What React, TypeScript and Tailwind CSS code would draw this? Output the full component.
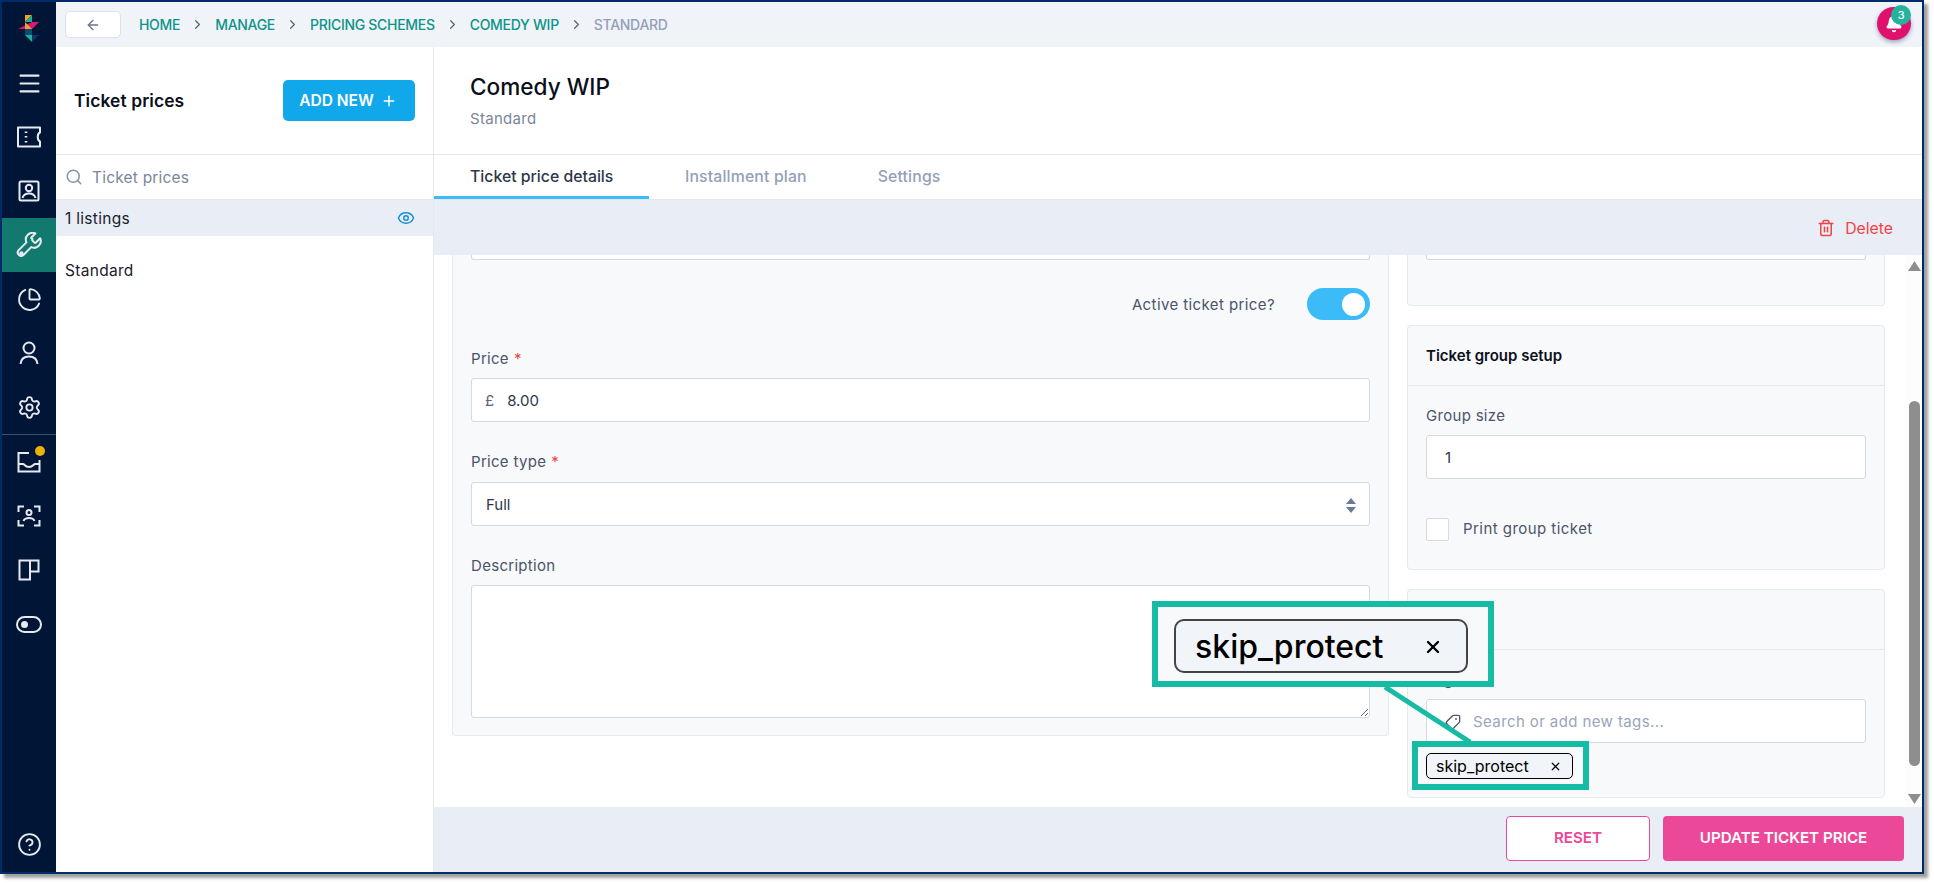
import React from "react";
import { ArrowLeft, ChevronRight, Search, Eye, Trash2, Tag, X, Menu, ChartPie, Settings, CircleHelp, Plus, Bell } from "lucide-react";

const Crumb = ({ children, last }: { children: React.ReactNode; last?: boolean }) => (
  <>
    <span className={last ? "text-[#94a0b8]" : "text-[#0d9488]"}>{children}</span>
    {!last && <ChevronRight size={15} className="text-[#5b6678] mx-[10px]" strokeWidth={2} />}
  </>
);

const NavItem = ({ children, active }: { children: React.ReactNode; active?: boolean }) => (
  <div className={`relative h-[54px] flex items-center justify-center text-[#e6e9f0] ${active ? "bg-[#11796d]" : ""}`}>
    {children}
  </div>
);

const Logo = () => (
  <svg width="22" height="28" viewBox="19 16 22 28">
    <polygon points="26,16 33,16 26,23" fill="#f59e2c" />
    <polygon points="33,16 33,23 26,23" fill="#18b39b" />
    <polygon points="19,30 33,23 33,30" fill="#e0116f" />
    <polygon points="33,23 40,23 33,30" fill="#d81b7a" />
    <polygon points="26,23 33,30 26,30" fill="#f59e2c" />
    <polygon points="26,30 33,30 33,36 26,36" fill="#0b4a78" />
    <polygon points="26,36 33,36 33,43" fill="#18b39b" />
    <polygon points="33,36 40,36 33,43" fill="#0b3566" />
  </svg>
);

const stroke = { fill: "none", stroke: "currentColor", strokeWidth: 2 };

const TicketIcon = () => (
  <svg width="24" height="22" viewBox="0 0 24 22" {...stroke}>
    <path d="M1 1.5H23V6.5C20 7.5 20 14.5 23 15.5V20.5H1Z" strokeLinejoin="round" />
    <path d="M9 5.5v1.5M9 10v1.5M9 15v1.5" strokeWidth="2.6" />
  </svg>
);
const ContactIcon = () => (
  <svg width="22" height="22" viewBox="0 0 22 22" {...stroke}>
    <rect x="1.5" y="1.5" width="19" height="19" rx="1.5" />
    <circle cx="11" cy="8" r="3.2" />
    <path d="M4.5 18c1-3.5 3.5-4.5 6.500-4.500s5.500 1 6.500 4.500" />
  </svg>
);
const WrenchIcon = () => (
  <svg width="27" height="27" viewBox="0 0 24 24" fill="none" stroke="currentColor" strokeWidth="1.8" strokeLinecap="round" strokeLinejoin="round">
    <path d="M14.700 6.300a1 1 0 0 0 0 1.400l1.600 1.600a1 1 0 0 0 1.400 0l3.770-3.770a6 6 0 0 1-7.940 7.940l-6.910 6.910a3 3 0 0 1-4.240-4.240l6.910-6.910a6 6 0 0 1 7.940-7.940l-3.760 3.760z" />
    <circle cx="4.800" cy="19.200" r="1.100" />
  </svg>
);
const UserIcon = () => (
  <svg width="20" height="24" viewBox="0 0 20 24" {...stroke}>
    <circle cx="10" cy="7" r="5.500" />
    <path d="M1.500 23c.5-5 3.500-7.500 8.500-7.500s8 2.500 8.500 7.500" />
  </svg>
);
const InboxIcon = () => (
  <svg width="24" height="22" viewBox="0 0 24 22" {...stroke}>
    <path d="M12 2H1.500V20.500H22.500V9" />
    <path d="M1.500 13H6c1.500 0 2 3 6 3s4.500-3 6-3h4.500" />
  </svg>
);
const ScanIcon = () => (
  <svg width="24" height="22" viewBox="0 0 24 22" {...stroke}>
    <path d="M1.500 7V1.500H7M17 1.500h5.500V7M1.500 15v5.500H7M17 20.500h5.500V15" />
    <circle cx="12" cy="7.500" r="2.500" />
    <path d="M6.500 16c1-2.500 3-3 5.500-3s4.500.5 5.500 3" />
  </svg>
);
const BoardIcon = () => (
  <svg width="22" height="22" viewBox="0 0 22 22" {...stroke}>
    <path d="M1.500 1.500H20.500V12.500H12V20.500H1.500ZM12 1.500V12.500" />
  </svg>
);
const ToggleIcon = () => (
  <svg width="26" height="17" viewBox="0 0 26 17">
    <rect x="1" y="1" width="24" height="15" rx="7.500" fill="none" stroke="currentColor" strokeWidth="2" />
    <circle cx="8.500" cy="8.500" r="3.500" fill="currentColor" />
  </svg>
);

const Label = ({ children, req }: { children: React.ReactNode; req?: boolean }) => (
  <div className="pt-[1px] text-[15px] leading-[20px] text-[#4a5568] tracking-[0.3px]">
    {children}
    {req && <span className="text-[#ef4444] ml-[5px]">*</span>}
  </div>
);

const field = "h-[44px] w-full bg-white border border-[#d5d9e2] rounded-[3px] text-[15px] text-[#2d3748] pt-[2px]";

export default function App() {
  return (
    <div className="w-full h-[883px] bg-white font-['Inter',sans-serif] overflow-hidden">
      <div className="relative w-[1924px] h-[874px] border-2 border-[#002b6b] shadow-[4px_4px_3px_#a0a0a0] flex">
        {/* Sidebar */}
        <aside className="w-[54px] shrink-0 bg-[#011536] flex flex-col">
          <div className="h-[54px] flex items-center justify-center"><Logo /></div>
          <NavItem><Menu size={27} strokeWidth={1.8} /></NavItem>
          <NavItem><TicketIcon /></NavItem>
          <NavItem><ContactIcon /></NavItem>
          <NavItem active><WrenchIcon /></NavItem>
          <NavItem><ChartPie size={25} strokeWidth={1.8} /></NavItem>
          <NavItem><UserIcon /></NavItem>
          <NavItem><Settings size={25} strokeWidth={1.8} /></NavItem>
          <div className="h-px bg-[#3c4f70]" />
          <NavItem>
            <InboxIcon />
            <span className="absolute left-[33px] top-[11px] w-[10px] h-[10px] rounded-full bg-[#eab308]" />
          </NavItem>
          <NavItem><ScanIcon /></NavItem>
          <NavItem><BoardIcon /></NavItem>
          <NavItem><ToggleIcon /></NavItem>
          <div className="mt-auto h-[54px] flex items-center justify-center text-[#e6e9f0] pb-[2px]">
            <CircleHelp size={25} strokeWidth={1.8} />
          </div>
        </aside>

        <div className="flex-1 min-w-0 flex flex-col">
          {/* Top bar */}
          <header className="relative h-[45px] shrink-0 bg-[#f0f3f8] flex items-center pl-[9px] text-[14px] font-medium tracking-[-0.3px]">
            <button className="w-[56px] h-[27px] bg-white border border-[#dde2ea] rounded-[5px] flex items-center justify-center text-[#6b7689] mr-[18px]">
              <ArrowLeft size={16} strokeWidth={2} />
            </button>
            <Crumb>HOME</Crumb>
            <Crumb>MANAGE</Crumb>
            <Crumb>PRICING SCHEMES</Crumb>
            <Crumb>COMEDY WIP</Crumb>
            <Crumb last>STANDARD</Crumb>
            <div className="absolute left-[1821px] top-[5px] w-[34px] h-[33px] rounded-full bg-[#e0106f] shadow-[0_2px_4px_#9aa3b5] flex items-center justify-center text-white">
              <Bell size={18} fill="white" />
              <span className="absolute left-[14px] top-[-2px] w-[20px] h-[20px] rounded-full bg-[#26b39d] text-white text-[11px] flex items-center justify-center">3</span>
            </div>
          </header>

          <div className="flex-1 min-h-0 flex">
            {/* Left panel */}
            <div className="w-[378px] shrink-0 border-r border-[#e5e8ee] bg-white flex flex-col">
              <div className="h-[108px] shrink-0 border-b border-[#e3e7ef] flex items-center justify-between pl-[18px] pr-[18px]">
                <span className="pt-[2px] text-[17.4px] font-semibold text-[#0b0f1a] tracking-[0.1px]">Ticket prices</span>
                <button className="w-[132px] h-[41px] pt-[1px] pr-[2px] bg-[#10a8ea] rounded-[5px] text-white text-[15.5px] font-semibold flex items-center justify-center gap-[7px]">
                  ADD NEW <Plus size={16} strokeWidth={2.2} />
                </button>
              </div>
              <div className="h-[45px] shrink-0 border-b border-[#e3e7ef] flex items-center pl-[9px] gap-[9px] text-[#7b869b] text-[15.5px] tracking-[0.2px]">
                <Search size={18} className="text-[#8a94a6]" />
                <span className="pt-[2px]">Ticket prices</span>
              </div>
              <div className="h-[36px] shrink-0 bg-[#e9edf6] flex items-center justify-between pl-[9px] pr-[18px] text-[15.5px] tracking-[0.3px] text-[#1a202c]">
                <span className="pt-[2px]">1 listings</span>
                <Eye size={18} className="text-[#1a8fd6]" />
              </div>
              <div className="pl-[9px] pt-[25px] text-[15.5px] leading-[20px] text-[#1a202c] tracking-[0.3px]">Standard</div>
            </div>

            {/* Right */}
            <div className="flex-1 min-w-0 flex flex-col">
              <div className="h-[108px] shrink-0 border-b border-[#e3e7ef] pl-[36px] pt-[24px]">
                <div className="text-[22.6px] leading-[32px] font-medium text-[#0b0f1a]">Comedy WIP</div>
                <div className="text-[15px] leading-[20px] mt-[6px] text-[#7b869b] tracking-[0.3px]">Standard</div>
              </div>
              <div className="h-[45px] shrink-0 flex border-b border-[#e3e7ef] text-[15.8px] font-medium">
                <div className="w-[215px] pl-[36px] pt-[3px] flex items-center border-b-[3px] border-[#3bbcf8] text-[#2d3748]">Ticket price details</div>
                <div className="ml-[36px] flex items-center text-[#94a0b8] tracking-[0.15px]">Installment plan</div>
                <div className="ml-[71px] flex items-center text-[#94a0b8] tracking-[0.15px]">Settings</div>
              </div>
              <div className="h-[55px] shrink-0 bg-[#e9edf6] flex items-center justify-end pr-[29px] gap-[10px] text-[#ef4444] text-[15.8px]">
                <Trash2 size={18} />
                <span className="pt-[2px]">Delete</span>
              </div>

              {/* Content */}
              <div className="flex-1 min-h-0 flex pl-[18px] bg-white overflow-hidden">
                <div className="w-[937px] shrink-0 h-[481px] bg-[#f8f9fb] border border-t-0 border-[#e5e9f0] rounded-b-[4px] px-[18px]">
                  <div className="h-[5px] bg-white border border-t-0 border-[#d5d9e2] rounded-b-[3px]" />
                  <div className="flex items-center justify-end mt-[28px] gap-[32px] h-[32px]">
                    <span className="pt-[2px] text-[15px] text-[#4a5568] tracking-[0.4px]">Active ticket price?</span>
                    <span className="w-[63px] h-[32px] rounded-full bg-[#3bbcf8] flex items-center justify-end pr-[5px]">
                      <span className="w-[23px] h-[23px] rounded-full bg-white" />
                    </span>
                  </div>
                  <div className="mt-[28px]"><Label req>Price</Label></div>
                  <div className={`${field} mt-[9px] flex items-center pl-[13px] gap-[13px]`}>
                    <span className="text-[#5a6578]">£</span><span>8.00</span>
                  </div>
                  <div className="mt-[29px]"><Label req>Price type</Label></div>
                  <div className={`${field} mt-[10px] flex items-center justify-between pl-[14px] pr-[12px]`}>
                    <span>Full</span>
                    <svg width="12" height="15" viewBox="0 0 12 15" fill="#6b7a90">
                      <polygon points="6,0 11,6 1,6" /><polygon points="6,15 11,9 1,9" />
                    </svg>
                  </div>
                  <div className="mt-[29px]"><Label>Description</Label></div>
                  <textarea readOnly className="block mt-[9px] w-full h-[133px] bg-white border border-[#d5d9e2] rounded-[3px] outline-none" />
                </div>

                <div className="w-[478px] shrink-0 ml-[18px] flex flex-col gap-[19px]">
                  <div className="h-[51px] shrink-0 bg-[#f8f9fb] border border-t-0 border-[#e5e9f0] rounded-b-[4px] px-[18px]">
                    <div className="h-[5px] bg-white border border-t-0 border-[#d5d9e2] rounded-b-[3px]" />
                  </div>
                  <div className="h-[245px] shrink-0 bg-[#f8f9fb] border border-[#e5e9f0] rounded-[4px]">
                    <div className="h-[60px] pt-[2px] border-b border-[#e5e9f0] flex items-center pl-[18px] text-[15px] font-semibold text-[#0b0f1a]">Ticket group setup</div>
                    <div className="px-[18px]">
                      <div className="mt-[19px]"><Label>Group size</Label></div>
                      <div className={`${field} mt-[9px] flex items-center pl-[18px]`}>1</div>
                      <div className="mt-[39px] flex items-center gap-[14px]">
                        <span className="w-[23px] h-[23px] bg-white border border-[#d5d9e2] rounded-[2px]" />
                        <span className="text-[15px] text-[#4a5568] tracking-[0.45px]">Print group ticket</span>
                      </div>
                    </div>
                  </div>
                  <div className="h-[209px] shrink-0 bg-[#f8f9fb] border border-[#e5e9f0] rounded-[4px]">
                    <div className="h-[60px] border-b border-[#e5e9f0]" />
                    <div className="px-[18px]">
                      <div className="mt-[19px]"><Label>Tags</Label></div>
                      <div className={`${field} mt-[9px] flex items-center pl-[18px] gap-[12px]`}>
                        <Tag size={16} className="rotate-90 text-[#4a5568]" />
                        <span className="text-[#9aa5bb] tracking-[0.4px]">Search or add new tags...</span>
                      </div>
                      <div className="mt-[10px] w-[147px] h-[26px] bg-[#f1f4f9] border border-black rounded-[5px] flex items-center justify-between pl-[9px] pr-[10px] text-[16px] text-black">
                        skip_protect <X size={13} strokeWidth={2.2} />
                      </div>
                    </div>
                  </div>
                </div>

                {/* Scrollbar */}
                <div className="w-[18px] shrink-0 ml-[20px] bg-[#fdfdfd] flex flex-col items-center pt-[6px] text-[#8e8e8e]">
                  <svg width="13" height="10" viewBox="0 0 13 10" fill="#8e8e8e"><polygon points="6.500,0 13,10 0,10" /></svg>
                  <div className="mt-[130px] w-[11px] h-[365px] rounded-full bg-[#8e8e8e]" />
                  <svg className="mt-[28px]" width="13" height="10" viewBox="0 0 13 10" fill="#8e8e8e"><polygon points="6.500,10 13,0 0,0" /></svg>
                </div>
              </div>

              {/* Footer */}
              <div className="h-[65px] shrink-0 bg-[#e9edf6] flex items-start justify-end pt-[9px] pr-[18px] gap-[13px] text-[15.2px] font-semibold">
                <button className="w-[144px] h-[45px] bg-white border border-[#ec4899] rounded-[4px] text-[#ec4899]">RESET</button>
                <button className="w-[241px] h-[45px] bg-[#ec4899] rounded-[4px] text-white">UPDATE TICKET PRICE</button>
              </div>
            </div>
          </div>
        </div>

        {/* Callout annotation */}
        <svg className="absolute left-[1380px] top-[683px] pointer-events-none" width="90" height="58" viewBox="0 0 90 58">
          <line x1="3" y1="2" x2="88" y2="57" stroke="#15bba3" strokeWidth="5" />
        </svg>
        <div className="absolute left-[1150px] top-[599px] w-[342px] h-[86px] pt-[3px] pl-[16px] bg-[#f8f9fb] border-[6px] border-[#15bba3] flex items-center justify-start">
          <div className="w-[294px] h-[54px] pt-[2px] bg-[#f1f4f9] border-2 border-[#444] rounded-[10px] flex items-center justify-between pl-[19px] pr-[23px] text-[32px] font-medium text-black">
            skip_protect <X size={20} strokeWidth={2.8} />
          </div>
        </div>
        <div className="absolute left-[1410px] top-[739px] w-[177px] h-[49px] border-[6px] border-[#15bba3]" />
      </div>
    </div>
  );
}
